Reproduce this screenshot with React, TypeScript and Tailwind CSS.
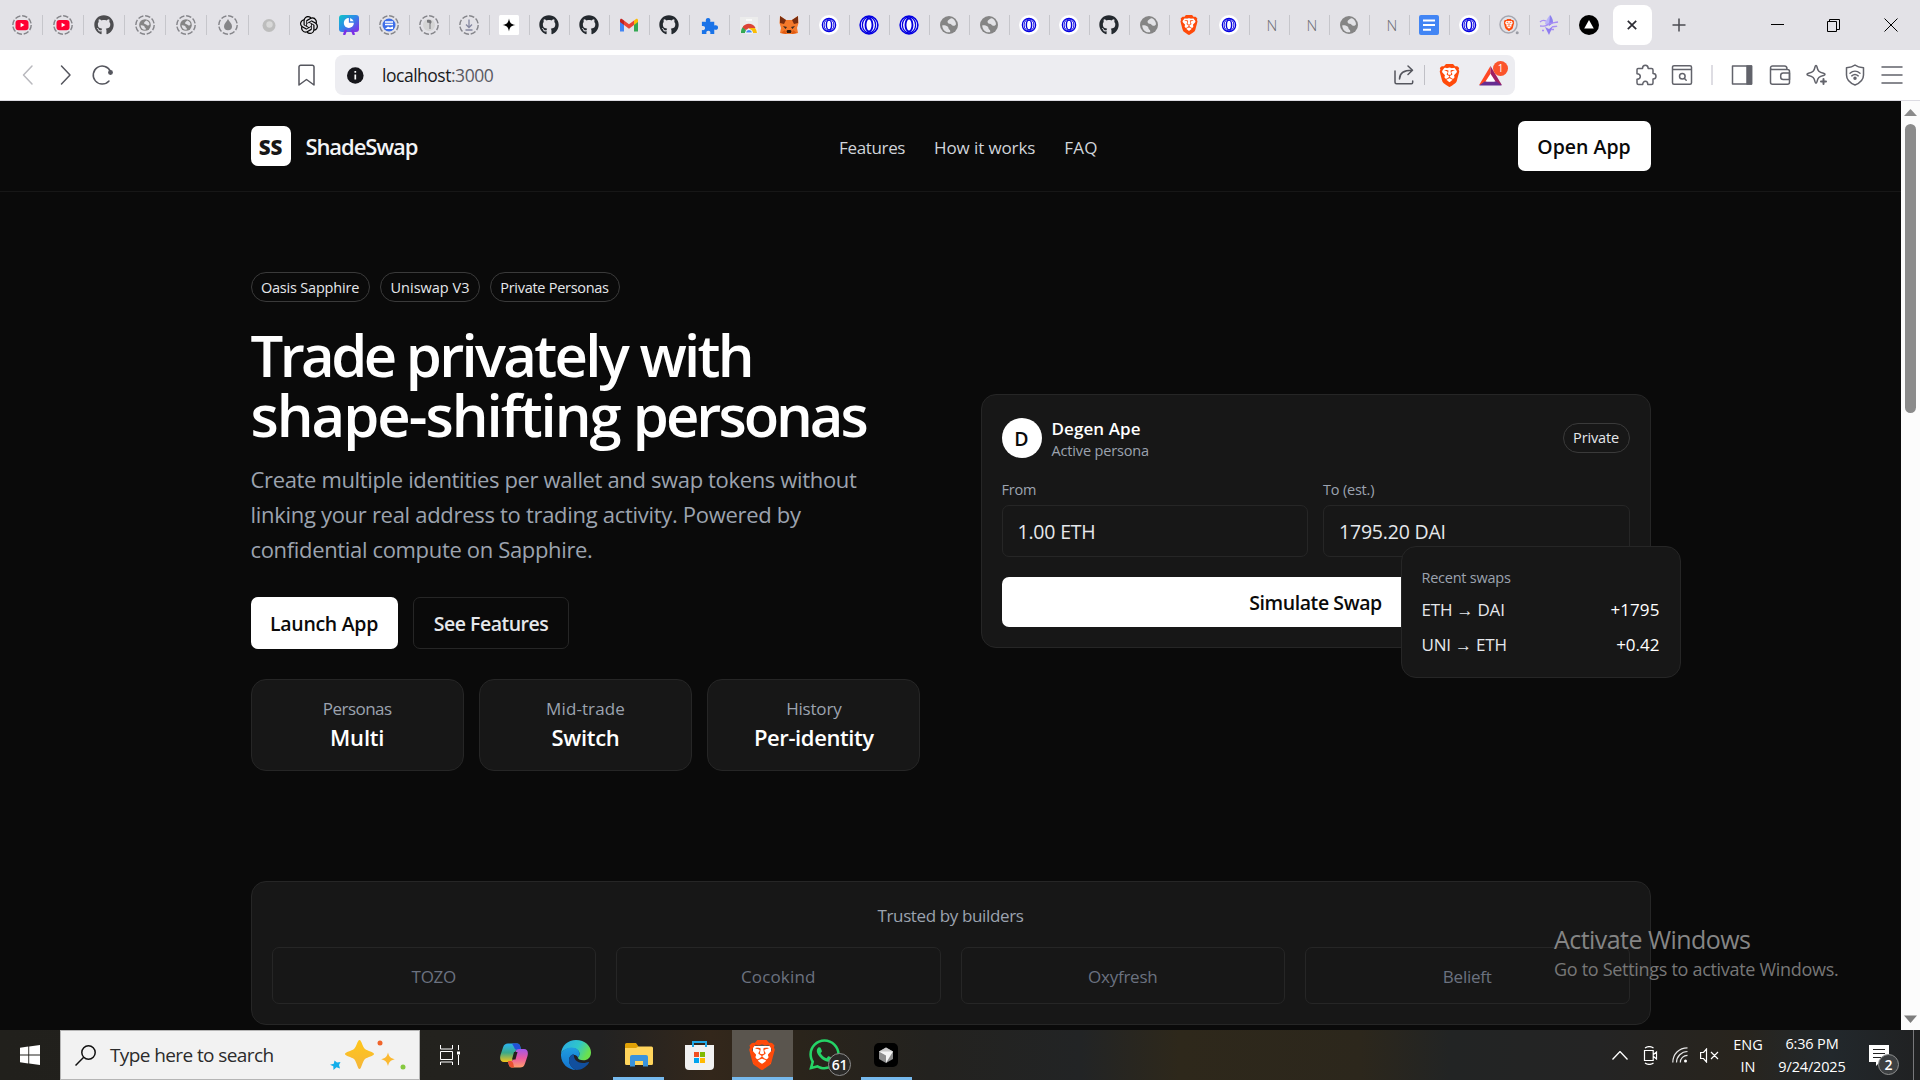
import type { ReactNode } from 'react'
import { SiBrave, SiOpenai } from 'react-icons/si'
import { FaGithub, FaWhatsapp } from 'react-icons/fa'
import clsx from 'clsx'

/* ---------- favicons ---------- */

function Svg({ size = 20, children }: { size?: number; children: ReactNode }) {
  return (
    <svg width={size} height={size} viewBox="0 0 20 20" fill="none" className="shrink-0">
      {children}
    </svg>
  )
}

const Ring = ({ children }: { children?: ReactNode }) => (
  <Svg>
    <circle cx="10" cy="10" r="9.2" stroke="#85858a" strokeWidth="1.4" strokeDasharray="5.4 1.8" />
    {children}
  </Svg>
)

const Youtube = () => (
  <Ring>
    <rect x="3.5" y="5" width="13" height="10.2" rx="3" fill="#ff0033" />
    <path d="M8.6 7.8 12.4 10l-3.8 2.2z" fill="#fff" />
  </Ring>
)

const GlobeShape = () => (
  <>
    <circle cx="10" cy="10" r="9" fill="#858585" />
    <path
      d="M3.2 10.4c1.8-.4 4 .2 5.4 1.2 1.2.8.5 2 1.6 2.8 1 .6 1.4 1.6.8 2.9-4.2.6-7.6-2.5-7.800-6.900zM9.300 5.200c1.500-.7 2-2.200 3.700-1.900 2.400 1.100 3.900 3.300 4 5.900-.9 1.700-2.300 2-3.600 1.300-1-.6-1.100-1.600-2.500-1.700-2-.1-3.200-2.400-1.600-3.600z"
      fill="#e2e2e6"
    />
  </>
)

const Globe = () => (
  <Svg>
    <GlobeShape />
  </Svg>
)

const RingGlobe = () => (
  <Ring>
    <g transform="translate(3.5 3.5) scale(.65)">
      <GlobeShape />
    </g>
  </Ring>
)

const OasisShape = () => (
  <g stroke="#0500e0">
    <circle cx="10" cy="10" r="8.9" strokeWidth="1.6" />
    <ellipse cx="10" cy="10" rx="6.6" ry="8" strokeWidth="1.3" />
    <ellipse cx="10" cy="10" rx="3.5" ry="6.5" strokeWidth="1.9" />
  </g>
)

const Oasis = () => (
  <Svg>
    <circle cx="10" cy="10" r="10" fill="#fff" />
    <g transform="translate(2.5 2.5) scale(.75)">
      <OasisShape />
    </g>
  </Svg>
)

const OasisBig = () => (
  <Svg>
    <circle cx="10" cy="10" r="9.5" fill="#fff" />
    <OasisShape />
  </Svg>
)

const Letter = () => <span className="mr-[-5px] text-[15px] leading-5 font-light tracking-[-0.5px] text-[#6d6d72]">N</span>

const Puzzle = () => (
  <path d="M2 6h4.3C5.500 3.500 6.600 2 8.500 2s3 1.500 2.200 4H15v4c2.400-.8 4 .2 4 2.100s-1.600 3-4 2.200V19h-4.200c.6-2.200-.4-3.400-2-3.400S6.200 16.800 6.800 19H2v-4.200c2.200.5 3.300-.6 3.300-2.200S4.200 10 2 10.600z" />
)

function Brave({ className, size = 20 }: { className?: string; size?: number }) {
  return (
    <span className={clsx('grid place-items-center', className)}>
      <span className="col-start-1 row-start-1 h-3/5 w-3/5 bg-white" />
      <SiBrave size={size} className="col-start-1 row-start-1 text-[#ff4a0a]" />
    </span>
  )
}

const earlyTabs = [
  <Youtube />,
  <Youtube />,
  <FaGithub size={20} color="#4d4d50" />,
  <RingGlobe />,
  <RingGlobe />,
  <Ring>
    <path d="M10 4c1 2.500 4 4.500 4 7.300a4 4 0 0 1-8 0C6 8.500 9 6.500 10 4z" fill="#858588" />
  </Ring>,
  <Svg>
    <circle cx="10" cy="10.500" r="6.500" fill="#bdbdbd" />
    <circle cx="10.500" cy="9.500" r="3.200" fill="#d8d8d8" />
  </Svg>,
]

const tabs = [
  <SiOpenai size={18} />,
  <Svg>
    <defs>
      <linearGradient id="pie" x1="0" y1="0" x2="1" y2="1">
        <stop stopColor="#0fc5c5" />
        <stop offset=".45" stopColor="#2c8ce8" />
        <stop offset="1" stopColor="#8a25e8" />
      </linearGradient>
    </defs>
    <rect width="20" height="17" rx="3" fill="url(#pie)" />
    <path d="m7 15-2 5m8-5 2 5" stroke="#7a2fe6" strokeWidth="2.400" />
    <circle cx="9.800" cy="8" r="5" fill="#fff" />
    <path d="M10.500 2.500V7h5.500" stroke="#3a7fe8" strokeWidth="1.300" />
  </Svg>,
  <Ring>
    <circle cx="10" cy="10" r="6.500" fill="#3e6ee8" />
    <path d="M6 7h8M6 9.500h8" stroke="#fff" strokeWidth="1.300" />
    <path d="m6 14 3-2.500 2 1 3-1V14z" fill="#fff" />
  </Ring>,
  <Ring>
    <circle cx="10" cy="10" r="6" fill="#d5d5d5" />
    <path d="M8 5c3-1 5 .5 4.500 2.500L11.500 9v5h-1V8L8 7.500z" fill="#77777a" />
  </Ring>,
  <Ring>
    <path d="M10 4.500v8m-3-3 3 3 3-3M6.500 15h7" stroke="#8587a0" strokeWidth="1.300" />
  </Ring>,
  <Svg>
    <rect width="20" height="20" rx="1.500" fill="#fff" />
    <path d="M10 3.500c.8 4.500 2 5.700 6.500 6.500-4.500.8-5.700 2-6.500 6.500-.8-4.500-2-5.700-6.500-6.500 4.500-.8 5.700-2 6.500-6.500z" fill="#000" />
  </Svg>,
  <FaGithub size={20} color="#24292f" />,
  <FaGithub size={20} color="#24292f" />,
  <Svg>
    <path d="M1 5v11.500h4V9z" fill="#4285f4" />
    <path d="M19 5v11.500h-4V9z" fill="#34a853" />
    <path d="M15 5.500 17 4c1-.7 2 0 2 1.200V7l-4 3z" fill="#fbbc04" />
    <path d="M5 10 1 7V5.200C1 4 2 3.300 3 4l2 1.500z" fill="#c5221f" />
    <path d="m5 5.500 5 3.800 5-3.800V10l-5 3.800L5 10z" fill="#ea4335" />
  </Svg>,
  <FaGithub size={20} color="#24292f" />,
  <Svg size={19}>
    <g fill="#1a73e8">
      <Puzzle />
    </g>
  </Svg>,
  <Svg>
    <rect x="1" y="2" width="18" height="16" fill="#ececec" />
    <path d="M7 5h6" stroke="#fff" strokeWidth="1.500" />
    <path d="M2 18a8 8 0 0 1 3-7l3 7z" fill="#34a853" />
    <path d="M18 18a8 8 0 0 0-2-5h-6l2 5z" fill="#fbbc04" />
    <path d="M3.500 12.500C6 7.500 14 7.500 16.500 13H10l-3 2z" fill="#db4437" />
    <path d="M6.500 18a3.500 3.500 0 0 1 7 0z" fill="#4285f4" stroke="#fff" />
  </Svg>,
  <Svg>
    <path d="m1 1 6 4h6l6-4 .5 7-1.500 5 1 5-5 1h-8l-5-1 1-5L.5 8z" fill="#f5792a" />
    <path d="m1 1 6 4-2 4-4-1zM19 1l-6 4 2 4 4-1z" fill="#7a2d0e" />
    <path d="m4 11 4 1-1.500 2zM16 11l-4 1 1.500 2z" fill="#3a2a22" />
    <path d="m7.500 16 1-1h3l1 1-.5 2H8z" fill="#2b1a12" />
    <path d="m2 18 4-3 1.500 4zM18 18l-4-3-1.500 4z" fill="#e05a12" />
  </Svg>,
  <Oasis />,
  <OasisBig />,
  <OasisBig />,
  <Globe />,
  <Globe />,
  <Oasis />,
  <Oasis />,
  <FaGithub size={20} color="#24292f" />,
  <Globe />,
  <Brave size={20} />,
  <Oasis />,
  <Letter />,
  <Letter />,
  <Globe />,
  <Letter />,
  <Svg>
    <rect width="20" height="20" rx="2" fill="#4285f4" />
    <path d="M4 5.500h12M4 10h12M4 14.800h8" stroke="#fff" strokeWidth="2" />
  </Svg>,
  <Oasis />,
  <span className="grid place-items-center">
    <span className="col-start-1 row-start-1">
      <Svg>
        <circle cx="9.500" cy="9.500" r="8.500" stroke="#a5a7b0" strokeWidth="1.500" />
        <circle cx="18.200" cy="17.800" r="1.500" fill="#9a9ca5" />
      </Svg>
    </span>
    <Brave size={12} className="col-start-1 row-start-1 mr-px" />
  </span>,
  <Svg>
    <path d="M11 0c-3 4-5 7-5 9l3 2 5-3c0-3-1-6-3-8z" fill="#b9b4f8" />
    <path d="m6 12 4 2 4-3-4 9z" fill="#8f7cf0" />
    <path d="M11 0c2 2 3 5 3 8l-4 3z" fill="#8d80ee" />
    <path d="M1 7c2-2 4-2 6-1M1 11c3 0 5 1 7-1s6-2 11-3M13 12c2-1 4 0 5-1M3 15.500h2M12 14.500h3" stroke="#a78df3" strokeWidth="1.300" />
  </Svg>,
  <Svg>
    <circle cx="10" cy="10" r="10" fill="#000" />
    <path d="m10 5 4.800 8.600H5.200z" fill="#fff" />
  </Svg>,
]

/* ---------- browser chrome ---------- */

function TabStrip() {
  return (
    <div className="flex h-[50px] items-center bg-[#e3e2e7] pl-[2px]">
      {earlyTabs.map((icon, i) => (
        <div key={i} className="flex h-5 w-[41.1px] items-center justify-center border-r border-[#c6c6cb]">
          {icon}
        </div>
      ))}
      {tabs.map((icon, i) => (
        <div
          key={i}
          className={clsx(
            'flex h-5 w-10 items-center justify-center border-r',
            i === tabs.length - 1 ? 'border-transparent' : 'border-[#c6c6cb]',
          )}
        >
          {icon}
        </div>
      ))}
      <div className="ml-[3px] flex h-10 w-[39px] items-center justify-center rounded-lg bg-white">
        <svg width="10" height="10" viewBox="0 0 10 10" stroke="#2c2c33" strokeWidth="1.700">
          <path d="m.8.8 8.400 8.400M9.200.8.8 9.200" />
        </svg>
      </div>
      <svg width="14" height="14" viewBox="0 0 14 14" className="ml-5" stroke="#4b4b52" strokeWidth="1.500">
        <path d="M7 .5v13M.5 7h13" />
      </svg>
      <svg width="13" height="14" viewBox="0 0 13 14" className="ml-[85px]" stroke="#000">
        <path d="M0 6.500h13" />
      </svg>
      <svg width="13" height="14" viewBox="0 0 13 14" className="ml-[43px]" stroke="#000" fill="none">
        <path d="M.5 3.500h9v10h-9zM2.500 3.500v-2h10v10h-3" />
      </svg>
      <svg width="14" height="14" viewBox="0 0 14 14" className="ml-[44px]" stroke="#000">
        <path d="m.5.5 13 13M13.500.5l-13 13" />
      </svg>
    </div>
  )
}

function Tool({ className, color = '#62636b', children }: { className?: string; color?: string; children: ReactNode }) {
  return (
    <svg
      width="22"
      height="22"
      viewBox="-1 -1 22 22"
      fill="none"
      stroke={color}
      strokeWidth="1.500"
      strokeLinejoin="round"
      strokeLinecap="round"
      className={clsx('shrink-0', className)}
    >
      {children}
    </svg>
  )
}

function Toolbar() {
  return (
    <div className="flex h-[51px] items-center border-b border-[#dcdbe2] bg-white pl-4">
      <Tool color="#b9b9be">
        <path d="m15 1-8.500 9 8.500 9" />
      </Tool>
      <Tool className="ml-4" color="#55565e">
        <path d="m6.500 1 8.500 9-8.500 9" />
      </Tool>
      <Tool className="ml-[15px]" color="#55565e">
        <path d="M17 16A9 9 0 1 1 18.500 6.500" />
        <circle cx="18.500" cy="7.500" r="1.700" fill="#55565e" />
      </Tool>
      <Tool className="ml-[182px]" color="#55565e">
        <path d="M3 2A1.700 1.700 0 0 1 4.700.3h11.600A1.700 1.700 0 0 1 18 2v18l-7.500-5.500L3 20z" />
      </Tool>
      <div className="ml-[18px] flex h-10 w-[1180px] items-center rounded-[8px] bg-[#ededf1] pr-[13px] pl-3">
        <svg width="17" height="17" viewBox="0 0 17 17">
          <circle cx="8.300" cy="8.500" r="8.300" fill="#17171c" />
          <path d="M8.300 7.500v5M8.300 4v1.700" stroke="#fff" strokeWidth="1.700" />
        </svg>
        <span className="ml-[18px] -mt-px text-[17.5px] leading-6 tracking-[-0.48px] text-[#1b1b20]">
          localhost<span className="text-[#5b5b63]">:3000</span>
        </span>
        <Tool className="ml-auto" color="#55565e">
          <path d="M1 6v11.200q0 1.500 1.500 1.500h15q1.200 0 1.200-1.500V16" />
          <path d="M5.500 14c0-6 3.500-8.700 12.500-8.700M14 1l4.500 4.300L14 9.500" />
        </Tool>
        <span className="ml-[9px] h-5 w-px bg-[#c0c0c6]" />
        <Brave size={23} className="ml-[13px]" />
        <div className="relative ml-[18px]">
          <svg width="23" height="20" viewBox="0 0 25 22" className="mt-px">
            <path d="M12.500 0 0 21h6l6.500-11z" fill="#ff4724" />
            <path d="M12.500 0 25 21h-6l-6.500-11z" fill="#9e1f63" />
            <path d="M0 21.500 6 17h13l6 4.500z" fill="#662d91" />
            <path d="m12.500 8.500 5.500 8.500H7z" fill="#fff" />
          </svg>
          <span className="absolute -top-[4px] left-[14px] flex h-[15px] w-[15px] items-center justify-center rounded-full bg-[#fb542b] text-[10px] leading-none text-white">
            1
          </span>
        </div>
      </div>
      <Tool className="ml-[120px]">
        <path d="M3 3.500h3.500C6.500 1.500 7.500.2 9.300.2s2.900 1.300 2.900 3.300H15.500a1.500 1.500 0 0 1 1.500 1.500v3.500c1.700 0 3 1.200 3 2.700s-1.300 2.800-3 2.800v4a1.500 1.500 0 0 1-1.500 1.500h-3.700c0-2-1-3.200-2.500-3.200s-2.600 1.200-2.600 3.200H2.500A1.500 1.500 0 0 1 1 18v-3.700c2 0 3.300-1 3.300-2.700S3 8.800 1 8.800V5a1.500 1.500 0 0 1 2-1.500z" />
      </Tool>
      <Tool className="ml-[14px]">
        <path d="M.5 2.200A1.500 1.500 0 0 1 2 .7h16a1.500 1.500 0 0 1 1.500 1.500v15.600a1.500 1.500 0 0 1-1.500 1.500H2a1.500 1.500 0 0 1-1.500-1.500zM.5 4.500h19" />
        <circle cx="10.300" cy="11.200" r="2.800" />
        <path d="m12.500 13.500 1.700 1.700" />
      </Tool>
      <span className="ml-[18px] h-5 w-[2px] bg-[#dedde3]" />
      <Tool className="ml-[18px]">
        <path d="M.5 1h19v18H.5z" />
        <path d="M15 1h4.500v18H15z" fill="#62636b" />
      </Tool>
      <Tool className="ml-4">
        <path d="M.5 3.500v13.700a2 2 0 0 0 2 2h15a2 2 0 0 0 2-2V6.500a2 2 0 0 0-2-2H2A1.500 1.500 0 0 1 .5 3 2 2 0 0 1 2.500 1h12q2.500 0 2.500 3" />
        <path d="M19.500 8h-6.300a2.500 2.500 0 0 0-2.500 2.500V12a2.500 2.500 0 0 0 2.500 2.500h6.300z" />
      </Tool>
      <Tool className="ml-[15px]">
        <path d="M9 .5c.6 0 .8.6 1 1.500.8 4 2 5.300 6.500 6.300.9.200 1.500.4 1.500 1s-.6.900-1.500 1.100c-4.500 1-5.700 2.300-6.500 6.300-.2.900-.4 1.500-1 1.500s-.8-.6-1-1.500c-.8-4-2-5.300-6.500-6.300C.6 10.200 0 9.900 0 9.300s.6-.8 1.500-1C6 7.300 7.200 6 8 2c.2-.9.400-1.500 1-1.500z" />
        <path d="M16.500 14v5M14 16.500h5" strokeWidth="2" />
      </Tool>
      <Tool className="ml-[16px]">
        <path d="M10 0c2.500 2 5.500 2.500 8.500 2.700V10c0 4.500-3.500 8-8.500 10-5-2-8.500-5.500-8.500-10V2.700C4.500 2.500 7.500 2 10 0z" />
        <path d="M5 8.300c3-2.700 7-2.700 10 0M6.800 10.900c2-1.700 4.400-1.700 6.400 0" strokeWidth="1.400" />
        <circle cx="10" cy="13.200" r="1" fill="#62636b" />
      </Tool>
      <Tool className="ml-[15px]">
        <path d="M0 2h20M0 10h20M0 18h20" />
      </Tool>
    </div>
  )
}

function Scrollbar() {
  return (
    <div className="flex w-[19px] flex-col items-center bg-[#fcfcfc] pt-2 pb-[7px]">
      <svg width="13" height="7" viewBox="0 0 13 7">
        <path d="M6.500 0 13 7H0z" fill="#8b8b8b" />
      </svg>
      <div className="mt-2 h-[289px] w-[11px] rounded-full bg-[#8b8b8b]" />
      <svg width="13" height="8" viewBox="0 0 13 8" className="mt-auto">
        <path d="M0 .5h13L6.500 8z" fill="#7d7d7d" />
      </svg>
    </div>
  )
}

/* ---------- landing page ---------- */

const chip = 'flex h-[30px] items-center justify-center rounded-full border border-[#3a3a3a] pt-px text-[14.5px] text-[#e5e7eb]'

function Header() {
  return (
    <header className="border-b border-[#171717]">
      <div className="mx-auto flex h-[90px] w-[1400px] items-center justify-between">
        <div className="flex w-[320px] items-center gap-[15px]">
          <div className="flex h-10 w-10 items-center justify-center rounded-[7px] bg-white pt-0.5 text-[20.5px] font-extrabold text-[#171717]">
            SS
          </div>
          <span className="text-[22px] font-semibold tracking-[-1.1px] text-[#f3f4f6]">ShadeSwap</span>
        </div>
        <nav className="flex gap-[29px] pt-[3px] pl-[36px] text-[17px] text-[#d1d5db]">
          <span className="tracking-[-0.36px]">Features</span>
          <span className="tracking-[-0.11px]">How it works</span>
          <span className="tracking-[0.3px]">FAQ</span>
        </nav>
        <div className="flex w-[320px] justify-end">
          <button className="h-[50px] w-[133px] rounded-[7px] bg-white pt-0.5 text-[19.5px] font-semibold text-[#0a0a0a]">
            Open App
          </button>
        </div>
      </div>
    </header>
  )
}

const stats = [
  { label: 'Personas', value: 'Multi', l: 'tracking-[-0.53px]', v: 'tracking-[-0.2px]' },
  { label: 'Mid-trade', value: 'Switch', l: 'tracking-[0.1px]', v: 'tracking-[-0.3px]' },
  { label: 'History', value: 'Per-identity', l: 'tracking-[-0.2px]', v: 'tracking-[-0.4px]' },
]

function Hero() {
  return (
    <section className="mx-auto grid w-[1400px] grid-cols-2 items-center gap-[60px] py-20">
      <div>
        <div className="flex gap-[10px]">
          <span className={clsx(chip, 'w-[119px] tracking-[-0.2px]')}>Oasis Sapphire</span>
          <span className={clsx(chip, 'w-[100px] pl-px')}>Uniswap V3</span>
          <span className={clsx(chip, 'w-[130px] tracking-[-0.28px]')}>Private Personas</span>
        </div>
        <h1 className="mt-[23px] mb-[17px] text-[58px] leading-[60px] font-semibold whitespace-nowrap text-white">
          <span className="block tracking-[-2.7px]">
            <span className="tracking-[-3.6px]">Trade</span> privately with
          </span>
          <span className="block tracking-[-2px]">
            shape-shifting <span className="tracking-[-3px]">personas</span>
          </span>
        </h1>
        <p className="text-[22px] leading-[35px] whitespace-nowrap text-[#9ca3af]">
          <span className="block tracking-[-0.35px]">Create multiple identities per wallet and swap tokens without</span>
          <span className="block tracking-[-0.3px]">linking your real address to trading activity. Powered by</span>
          <span className="block tracking-[-0.34px]">confidential compute on Sapphire.</span>
        </p>
        <div className="mt-[30px] flex gap-[15px] text-[19.5px] font-semibold">
          <button className="h-[52px] w-[147px] rounded-[7px] bg-white pt-0.5 tracking-[-0.29px] text-[#0a0a0a]">
            Launch App
          </button>
          <button className="h-[52px] w-[156px] rounded-[7px] border border-[#262626] pt-0.5 pl-px tracking-[-0.5px] text-[#e5e7eb]">
            See Features
          </button>
        </div>
        <div className="mt-[30px] grid grid-cols-3 gap-[15px]">
          {stats.map((s) => (
            <div key={s.label} className="rounded-[15px] border border-[#262626] bg-[#171717] px-[15px] pt-4 pb-[14px] text-center">
              <div className={clsx('text-[17px] leading-[25px] text-[#9ca3af]', s.l)}>{s.label}</div>
              <div className={clsx('-mt-px mb-px text-[22px] leading-[35px] font-semibold text-white', s.v)}>{s.value}</div>
            </div>
          ))}
        </div>
      </div>
      <SwapCard />
    </section>
  )
}

function SwapCard() {
  return (
    <div className="relative mb-[1.5px]">
      <div className="rounded-[15px] border border-[#262626] bg-[#171717] p-5">
        <div className="flex items-center justify-between">
          <div className="flex items-center gap-[10px]">
            <div className="flex h-10 w-10 items-center justify-center rounded-full bg-white pt-0.5 text-[19.5px] font-semibold text-[#0a0a0a]">
              D
            </div>
            <div>
              <div className="pt-px text-[17px] leading-[25px] font-semibold tracking-[0.08px] text-white">Degen Ape</div>
              <div className="text-[14.5px] leading-5 tracking-[-0.15px] text-[#9ca3af]">Active persona</div>
            </div>
          </div>
          <span className={clsx(chip, 'w-[67px] tracking-[-0.15px]')}>Private</span>
        </div>
        <div className="mt-[19px] grid grid-cols-2 gap-[15px]">
          <div>
            <div className="text-[14.5px] leading-5 tracking-[-0.2px] text-[#9ca3af]">From</div>
            <div className="mt-[5px] flex h-[52px] items-center rounded-[7px] border border-[#262626] px-[15px] pt-px text-[19.5px] tracking-[-0.2px] text-[#e5e7eb]">
              1.00 ETH
            </div>
          </div>
          <div>
            <div className="text-[14.5px] leading-5 tracking-[-0.2px] text-[#9ca3af]">To (est.)</div>
            <div className="mt-[5px] flex h-[52px] items-center rounded-[7px] border border-[#262626] px-[15px] pt-px text-[19.5px] tracking-[-0.2px] text-[#e5e7eb]">
              1795.20 DAI
            </div>
          </div>
        </div>
        <button className="mt-5 block h-[50px] w-full rounded-[7px] bg-white pt-0.5 text-[19.5px] font-semibold tracking-[-0.42px] text-[#0a0a0a]">
          Simulate Swap
        </button>
      </div>
      <div className="absolute -right-[30px] -bottom-[30px] w-[280px] rounded-[15px] border border-[#262626] bg-[#171717] p-5">
        <div className="pt-px text-[14.5px] leading-5 tracking-[-0.24px] text-[#9ca3af]">Recent swaps</div>
        <div className="mt-[9px] flex justify-between text-[17px] leading-[25px] text-[#e5e7eb]">
          <span className="tracking-[-0.2px]">ETH → DAI</span>
          <span className="tracking-[0.1px] text-white">+1795</span>
        </div>
        <div className="mt-[10px] flex justify-between text-[17px] leading-[25px] text-[#e5e7eb]">
          <span className="tracking-[-0.2px]">UNI → ETH</span>
          <span className="text-white">+0.42</span>
        </div>
      </div>
    </div>
  )
}

const builders = [
  { name: 'TOZO', t: 'tracking-[-0.3px]' },
  { name: 'Cocokind', t: 'tracking-[0.15px]' },
  { name: 'Oxyfresh', t: 'tracking-[-0.24px]' },
  { name: 'Belieft', t: 'tracking-[-0.24px]' },
]

function Trusted() {
  return (
    <section className="mx-auto mt-[30px] w-[1400px] rounded-[15px] border border-[#262626] bg-[#171717] px-5 pt-[21px] pb-5">
      <p className="text-center text-[17px] leading-[25px] tracking-[-0.37px] text-[#9ca3af]">Trusted by builders</p>
      <div className="mt-[19px] grid grid-cols-4 gap-5">
        {builders.map((b) => (
          <div
            key={b.name}
            className={clsx(
              'rounded-[7px] border border-[#262626] pt-4 pb-[14px] text-center text-[17px] leading-[25px] text-[#6b7280]',
              b.t,
            )}
          >
            {b.name}
          </div>
        ))}
      </div>
    </section>
  )
}

/* ---------- taskbar ---------- */

function Taskbar() {
  return (
    <div className="flex h-[50px] bg-[linear-gradient(90deg,#21201c_0px,#23221e_440px,#222222_600px,#33271b_710px,#2a241b_800px,#23221f_930px,#222425_1080px,#2e281b_1180px,#2c271c_1360px,#222424_1450px,#242424_1600px,#28241d_1740px,#22282c_1830px,#202122_1920px)] text-white">
      <div className="flex w-[60px] items-center justify-center">
        <svg width="20" height="20" viewBox="0 0 20 20" fill="#fff">
          <path d="M0 2.700 8.300 1.500v8H0zM9.200 1.400 20 0v9.500H9.200zM0 10.500h8.300v8L0 17.300zM9.200 10.500H20V20L9.200 18.600z" />
        </svg>
      </div>
      <div className="flex w-[360px] items-center border border-[#b5b5b5] bg-[#f2f2f2] pl-[14px] text-[#2b2b2b]">
        <svg width="21" height="21" viewBox="0 0 21 21" fill="none" stroke="#111" strokeWidth="1.500">
          <circle cx="13.500" cy="7.500" r="6.700" />
          <path d="M8.700 12.300.5 20.500" />
        </svg>
        <span className="ml-[14px] text-[19px] tracking-[-0.6px]">Type here to search</span>
        <svg width="76" height="30" viewBox="0 0 76 30" className="mr-[13px] ml-auto">
          <defs>
            <linearGradient id="gold" x1="0" y1="0" x2="0" y2="1">
              <stop stopColor="#ffc61a" />
              <stop offset="1" stopColor="#f5b63a" />
            </linearGradient>
          </defs>
          <path
            d="M29.500 0c2 0 3 7 5.500 9s9 3 9 5-6.500 3-9 5-3.500 10-5.500 10-3-8-5.500-10-9-3-9-5 6.500-3 9-5 3.500-9 5.500-9z"
            fill="url(#gold)"
          />
          <path d="M58 12.500c1.200 4.500 2.300 5.500 6.800 6.700-4.500 1.200-5.600 2.300-6.800 6.800-1.200-4.500-2.300-5.600-6.800-6.800 4.500-1.200 5.600-2.200 6.800-6.700z" fill="#fbb931" />
          <path d="M4.500 20.500 7 22.500l3.500-.5L9 25l1 3.500-3.500-1.200L3.500 30l-.2-3.800L0 24.800l3.800-1z" fill="#12aeea" />
          <circle cx="50" cy="3" r="2.500" fill="#f0642a" />
          <circle cx="73" cy="27" r="2.500" fill="#86c940" />
        </svg>
      </div>
      <div className="flex w-[60px] items-center justify-center">
        <svg width="20" height="20" viewBox="0 0 20 20" fill="none" stroke="#fff">
          <path d="M.5 0v4h12V0M.5 6.500h12v8H.5zM.5 20v-3h12v3M18.500 0v5M18.500 10v10" />
          <path d="M17 6.500h3v3h-3z" fill="#fff" stroke="none" />
        </svg>
      </div>
      {/* copilot */}
      <div className="flex w-[67px] items-center justify-center">
        <svg width="28" height="25" viewBox="0 0 28 25">
          <defs>
            <linearGradient id="cpl" x1="0" y1="0" x2="0" y2="1">
              <stop stopColor="#2bb3f0" />
              <stop offset=".5" stopColor="#3aa98a" />
              <stop offset="1" stopColor="#f5c518" />
            </linearGradient>
            <linearGradient id="cpr" x1="0" y1="0" x2="0" y2="1">
              <stop stopColor="#a257e8" />
              <stop offset=".5" stopColor="#ea5aa0" />
              <stop offset="1" stopColor="#ff9f6b" />
            </linearGradient>
          </defs>
          <path d="M8 .5h9c2 0 3 1.500 3.500 4L21 7h-3c-2 0-3 1-3.500 3l-1.500 6c-.5 2-1.500 3-3.500 3H4c-3.500 0-4.500-3-3.500-7L3 4.500C4 1.500 5.500.5 8 .5z" fill="url(#cpl)" />
          <path d="M12 .5h5c2 0 3 1.500 3.500 4L21 7h-3c-2.500 0-3.500-1-4-3z" fill="#2350d8" />
          <path d="M20 24.500h-8c-2 0-3-1.500-3.500-4L8 18h2.500c2 0 3-1 3.500-3l1.500-6c.5-2 1.500-3 3.500-3h5c3.500 0 4.500 3 3.500 7L25 20.500c-1 3-2.500 4-5 4z" fill="url(#cpr)" />
          <path d="M14 9h3.500l-2 7.500H12z" fill="#22201d" />
          <path d="M8 18h2.500c2 0 3 2 3.500 6.500h-2c-2 0-3-1.500-3.500-4z" fill="#e8502f" />
        </svg>
      </div>
      {/* edge */}
      <div className="flex w-[58px] items-center justify-center">
        <svg width="30" height="30" viewBox="0 0 30 30">
          <defs>
            <linearGradient id="edg" x1="0" y1="0" x2="1" y2=".4">
              <stop stopColor="#2aa6e8" />
              <stop offset=".6" stopColor="#2fc7c9" />
              <stop offset="1" stopColor="#6ae04e" />
            </linearGradient>
            <linearGradient id="edb" x1="0" y1="0" x2="0" y2="1">
              <stop stopColor="#1f9de0" />
              <stop offset="1" stopColor="#1473cf" />
            </linearGradient>
          </defs>
          <path d="M0 14C.5 5.500 7 0 15 0c9 0 15 6 15 12.500 0 5-3.500 7.800-7.500 7.800-3.500 0-5.500-1.300-5.500-2.500 0-1 1.500-1.500 1.500-4C18.500 10.500 15 8 11 8 5.500 8 1.500 10.500 0 14z" fill="url(#edg)" />
          <path d="M0 14c1-3.500 5.500-6.500 10.500-6.500 5 0 8 3 8 6.300 0 2.200-1.500 3.200-1.500 4-1-2.300-2.500-3-4.500-3C9.500 14.800 8 17.500 8 20.500c0 4 3 7.500 7 9.500C6.500 30-.5 23 0 14z" fill="url(#edb)" />
          <path d="M8 20.500c0-3 2-6 5-6.500-.8 4.500 2.500 9 9 9 2.500 0 4.500-.7 5.500-1 .5 0 .7.300.4.800C25 27.500 20.500 30 15.500 30 11 28.500 8 24.500 8 20.500z" fill="#114f9e" />
        </svg>
      </div>
      {/* explorer */}
      <div className="ml-[8px] flex w-[51px] flex-col items-center border-b-[3px] border-[#76b9ed] pt-[13px]">
        <svg width="28" height="24" viewBox="0 0 28 24">
          <path d="M0 1.500A1.500 1.500 0 0 1 1.500 0H11l2.500 3.500V8H0z" fill="#e0a106" />
          <path d="M0 5h11l2.500-1.500h13A1.500 1.500 0 0 1 28 5v15.500a1.500 1.500 0 0 1-1.500 1.500h-25A1.500 1.500 0 0 1 0 20.500z" fill="#ffd45c" />
          <path d="M5 23.500V14a2 2 0 0 1 2-2h14a2 2 0 0 1 2 2v9.500h-5V18h-8v5.500z" fill="#3a93dc" />
        </svg>
      </div>
      {/* store */}
      <div className="flex w-[71px] items-start justify-center pt-[11px]">
        <svg width="29" height="29" viewBox="0 0 29 29">
          <path d="M8 7V1h13v6" stroke="#1fa8e8" strokeWidth="2" fill="none" />
          <path d="M0 4h29v21a4 4 0 0 1-4 4H4a4 4 0 0 1-4-4z" fill="#f1f1f1" />
          <path d="M8 6V4m13 2V4" stroke="#1fa8e8" strokeWidth="2" />
          <path d="M9 11h5v5H9z" fill="#f25022" />
          <path d="M15 11h5v5h-5z" fill="#7fba00" />
          <path d="M9 17h5v5H9z" fill="#00a4ef" />
          <path d="M15 17h5v5h-5z" fill="#ffb900" />
        </svg>
      </div>
      <div className="-ml-[3px] flex w-[61px] flex-col items-center border-b-[3px] border-[#76b9ed] bg-[#5a554e] pt-[10px]">
        <Brave size={30} className="-ml-[2px]" />
      </div>
      <div className="relative flex w-[62px] items-start justify-center pt-[7px]">
        <FaWhatsapp size={35} color="#25d366" />
        <span className="absolute top-[23px] left-[35px] flex h-[23px] w-[23px] items-center justify-center rounded-full border border-[#8d8d8d] bg-[#2b2a28] text-[14px] leading-none font-semibold tracking-tight">
          61
        </span>
      </div>
      <div className="ml-[6px] flex w-[51px] flex-col items-center border-b-[3px] border-[#76b9ed] pt-[13px]">
        <svg width="24" height="24" viewBox="0 0 24 24" className="-ml-px">
          <rect width="24" height="24" rx="5" fill="#000" />
          <path d="m12 4.500 7 4v7.500l-7 4-7-4V8.500z" fill="#8d8d8d" />
          <path d="m5 8.500 7-4 7 4-7 3.500z" fill="#c9c9c9" />
          <path d="M19 8.500 12 20v-7.500L5 8.500z" fill="#f4f4f4" />
        </svg>
      </div>

      {/* tray */}
      <div className="ml-auto flex w-[308px]">
        <div className="flex items-center">
          <svg width="16" height="9" viewBox="0 0 16 9" fill="none" stroke="#fff" strokeWidth="1.300">
            <path d="m.5 8.500 7.500-8 7.500 8" />
          </svg>
          <svg width="16" height="19" viewBox="0 0 16 19" className="ml-[15px]" fill="none" stroke="#fff" strokeWidth="1.200">
            <path d="M1.500 4.500h8.700v10H1.500zM10.500 8.500l3-2.500v7l-3-2.500M2 2C4.500.3 8 .3 10.500 2M2 17c2.500 1.700 6 1.700 8.500 0" />
          </svg>
          <svg width="16" height="16" viewBox="0 0 16 16" className="ml-[13px]" fill="none" stroke="#e8e8e8" strokeWidth="1.200">
            <path d="M.8 15.500C.8 7 7 .8 15.500.8M4.500 15.500c0-6 5-11 11-11M8.300 15.500c0-4 3.200-7.200 7.200-7.200" />
            <circle cx="13.500" cy="14" r="1.500" fill="#fff" stroke="none" />
          </svg>
          <svg width="19" height="15" viewBox="0 0 19 15" className="ml-[12px]" fill="none" stroke="#fff" strokeWidth="1.200">
            <path d="M.6 4.500h2.900L6.500 1v13l-3-3.500H.6zM11 4l7 7M18 4l-7 7" />
          </svg>
        </div>
        <div className="ml-[15px] flex w-[28px] flex-col items-center pt-[4px] text-[14.5px] leading-[22px]">
          <span>ENG</span>
          <span>IN</span>
        </div>
        <div className="ml-[16px] flex w-[68px] flex-col items-center pt-[2px] text-[14.5px] leading-[23px] tracking-[-0.15px]">
          <span>6:36 PM</span>
          <span>9/24/2025</span>
        </div>
        <div className="relative ml-[23px] w-[45px] border-r border-[#77777a] pt-[15px]">
          <svg width="20" height="21" viewBox="0 0 20 21">
            <path d="M0 0h20v17h-9l-4 4v-4H0z" fill="#fff" />
            <path d="M4 4.500h12M4 8.500h12M4 12.500h8" stroke="#222" strokeWidth="1.200" />
          </svg>
          <span className="absolute top-[24px] left-[9px] flex h-[21px] w-[21px] items-center justify-center rounded-full border border-[#8f9090] bg-[#3d4042] text-[14px] leading-none font-semibold">
            2
          </span>
        </div>
      </div>
    </div>
  )
}

export default function App() {
  return (
    <div className="relative flex h-[1080px] w-[1920px] flex-col overflow-hidden bg-[#0a0a0a] font-['Open_Sans','Noto_Sans',sans-serif]">
      <TabStrip />
      <Toolbar />
      <div className="flex h-[929px]">
        <main className="w-[1901px] overflow-hidden">
          <Header />
          <Hero />
          <Trusted />
        </main>
        <Scrollbar />
      </div>
      <Taskbar />
      {/* OS watermark floating over everything */}
      <div className="absolute top-[922px] left-[1554px] whitespace-nowrap text-[#858585]">
        <p className="text-[25px] leading-[34px] tracking-[-0.55px]">Activate Windows</p>
        <p className="text-[18px] leading-[26px] tracking-[-0.3px] text-[#777]">Go to Settings to activate Windows.</p>
      </div>
    </div>
  )
}
